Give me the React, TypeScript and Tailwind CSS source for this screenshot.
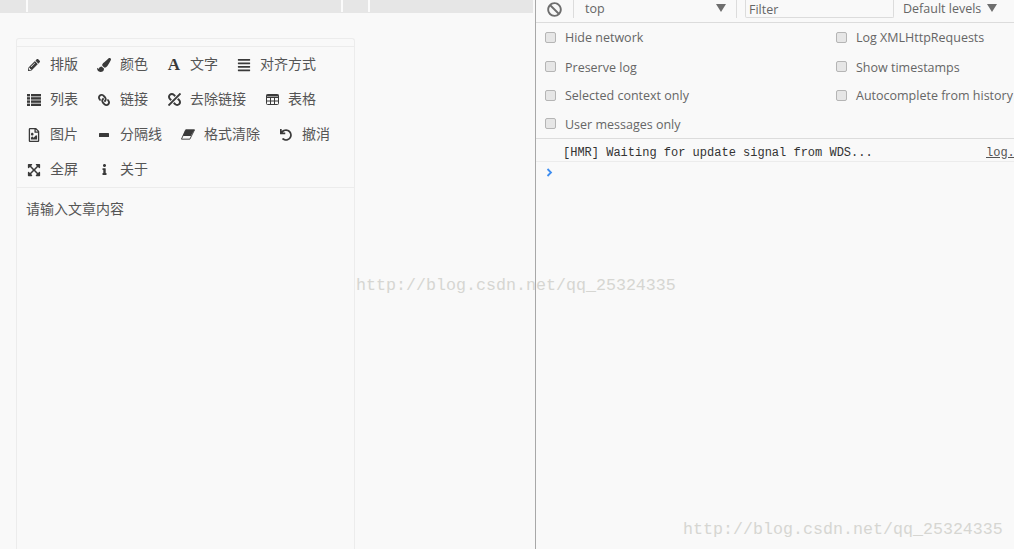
import type { ReactNode } from "react";
import {
  FaPencilAlt,
  FaPaintBrush,
  FaAlignJustify,
  FaLink,
  FaUnlink,
  FaRegFileImage,
  FaUndo,
  FaExpandArrowsAlt,
  FaInfo,
  FaBan,
} from "react-icons/fa";

const ListIcon = () => (
  <svg width="14" height="12" viewBox="0 0 14 12" fill="currentColor">
    <rect x="0" y="0" width="3" height="2.4" />
    <rect x="4" y="0" width="10" height="2.4" />
    <rect x="0" y="3.2" width="3" height="2.4" />
    <rect x="4" y="3.2" width="10" height="2.4" />
    <rect x="0" y="6.4" width="3" height="2.4" />
    <rect x="4" y="6.4" width="10" height="2.4" />
    <rect x="0" y="9.6" width="3" height="2.4" />
    <rect x="4" y="9.6" width="10" height="2.4" />
  </svg>
);

const TableIcon = () => (
  <svg width="13" height="11" viewBox="0 0 13 11" fill="none" stroke="currentColor" strokeWidth="1">
    <rect x="0.5" y="0.5" width="12" height="10" rx="1" />
    <path d="M0.5 3.5H12.5M0.5 7H12.5M4.5 3.5V10.5M8.5 3.5V10.5" />
    <path d="M0.5 1.5H12.5" strokeWidth="2" />
  </svg>
);

const EraserIcon = () => (
  <svg width="15" height="11" viewBox="0 0 15 11">
    <path d="M5 0.5H14.5L9.5 10.5H0.5Z" fill="none" stroke="currentColor" strokeWidth="1" />
    <path d="M5 0.5H14.5L10.5 7H2Z" fill="currentColor" />
  </svg>
);

const MinusIcon = () => (
  <svg width="10" height="4" viewBox="0 0 10 4" fill="currentColor">
    <rect width="10" height="4" rx="0.5" />
  </svg>
);

const rows: { icon: ReactNode; label: string }[][] = [
  [
    { icon: <FaPencilAlt size={12} />, label: "排版" },
    { icon: <FaPaintBrush size={14} />, label: "颜色" },
    { icon: <span className="font-['Liberation_Serif',serif] font-bold text-[17px] leading-none">A</span>, label: "文字" },
    { icon: <FaAlignJustify size={14} />, label: "对齐方式" },
  ],
  [
    { icon: <ListIcon />, label: "列表" },
    { icon: <FaLink size={12} className="-scale-x-100" />, label: "链接" },
    { icon: <FaUnlink size={13} className="-scale-x-100" />, label: "去除链接" },
    { icon: <TableIcon />, label: "表格" },
  ],
  [
    { icon: <FaRegFileImage size={14} />, label: "图片" },
    { icon: <MinusIcon />, label: "分隔线" },
    { icon: <EraserIcon />, label: "格式清除" },
    { icon: <FaUndo size={12} />, label: "撤消" },
  ],
  [
    { icon: <FaExpandArrowsAlt size={14} />, label: "全屏" },
    { icon: <FaInfo size={11} />, label: "关于" },
  ],
];

function Check({ label, height = "h-[29px]" }: { label: string; height?: string }) {
  return (
    <div className={`flex items-center whitespace-nowrap ${height}`}>
      <span className="w-[11px] h-[11px] rounded-[2px] border border-[#b5b5b5] bg-[#e6e6e6] mr-[9px] mb-[3px]" />
      <span>{label}</span>
    </div>
  );
}

function Watermark({ className }: { className: string }) {
  return (
    <div className={`absolute text-[16.67px] leading-none text-[#d6d6d2] font-['Liberation_Mono',monospace] whitespace-nowrap ${className}`}>
      http://blog.csdn.net/qq_25324335
    </div>
  );
}

export default function App() {
  return (
    <div className="relative flex w-[1014px] h-[549px] overflow-hidden bg-[#f9f9f9] font-['Noto_Sans_CJK_SC',sans-serif] text-[#555]">
      {/* página */}
      <div className="w-[535px] h-full flex flex-col shrink-0">
        <div className="flex h-[13px] w-[533px] bg-[#e6e6e6]">
          <div className="w-[28px] border-r-2 border-[#fbfbfb] h-[12px]" />
          <div className="w-[315px] border-r-2 border-[#fbfbfb] h-[12px]" />
          <div className="w-[27px] border-r-2 border-[#fbfbfb] h-[12px]" />
        </div>
        <div className="ml-4 mt-[25px] w-[339px] flex-1 border border-b-0 border-[#ececec] rounded-t-[3px]">
          <div className="h-2 border-b border-[#ececec]" />
          <div className="pl-[10px] border-b border-[#ececec] text-[14px]">
            {rows.map((row, i) => (
              <div key={i} className="flex items-center gap-[19px] h-[35px]">
                {row.map((item) => (
                  <div key={item.label} className="flex items-center gap-[9px]">
                    <span className="flex justify-center items-center w-[14px] text-[#3a3a3a]">{item.icon}</span>
                    <span className="-mt-[2px]">{item.label}</span>
                  </div>
                ))}
              </div>
            ))}
          </div>
          <div className="pl-[9px] pt-[10px] text-[14px] leading-[20px]">请输入文章内容</div>
        </div>
      </div>

      {/* consola */}
      <div className="flex-1 min-w-0 border-l border-[#a8a8a8] font-['Open_Sans',sans-serif] text-[12.5px] text-[#666]">
        <div className="flex items-center h-[23px] pb-1 border-b border-[#dcdcdc]">
          <FaBan size={15} className="ml-[11px] text-[#6e6e6e]" />
          <span className="ml-[11px] w-px h-[18px] bg-[#dcdcdc]" />
          <span className="ml-[11px] w-[131px]">top</span>
          <span className="w-0 h-0 border-x-[5px] border-x-transparent border-t-[8px] border-t-[#6e6e6e] mb-[3px]" />
          <span className="ml-[10px] w-px h-[18px] bg-[#dcdcdc]" />
          <span className="ml-2 w-[149px] h-[18px] border-l border-b border-r border-[#dcdcdc] pl-[3px] leading-[19px] rounded-b-[2px] -mt-[1px]">Filter</span>
          <span className="ml-[9px]">Default levels</span>
          <span className="ml-[6px] w-0 h-0 border-x-[5px] border-x-transparent border-t-[8px] border-t-[#6e6e6e] mb-[3px]" />
        </div>
        <div className="flex h-[116px] border-b border-[#dcdcdc] pt-[1px]">
          <div className="w-[300px] pl-[9px] shrink-0">
            <Check label="Hide network" height="h-[29px]" />
            <Check label="Preserve log" height="h-[30px]" />
            <Check label="Selected context only" height="h-[27px]" />
            <Check label="User messages only" height="h-[30px]" />
          </div>
          <div className="whitespace-nowrap">
            <Check label="Log XMLHttpRequests" height="h-[29px]" />
            <Check label="Show timestamps" height="h-[30px]" />
            <Check label="Autocomplete from history" height="h-[27px]" />
          </div>
        </div>
        <div className="flex h-[23px] items-center pt-[5px] border-b border-[#ececec] pl-[27px] font-['Liberation_Mono',monospace] text-[12px] text-[#333] whitespace-nowrap overflow-hidden">
          <span className="w-[423px] shrink-0">[HMR] Waiting for update signal from WDS...</span>
          <span className="underline text-[#555]">log.</span>
        </div>
        <div className="pl-[10px] pt-[6px]">
          <svg width="7" height="9" viewBox="0 0 7 9" className="block">
            <path d="M1.5 1 L5 4.5 L1.5 8" fill="none" stroke="#3f8ef0" strokeWidth="1.8" />
          </svg>
        </div>
      </div>

      <Watermark className="left-[356px] top-[278px]" />
      <Watermark className="left-[683px] top-[522px]" />
    </div>
  );
}
